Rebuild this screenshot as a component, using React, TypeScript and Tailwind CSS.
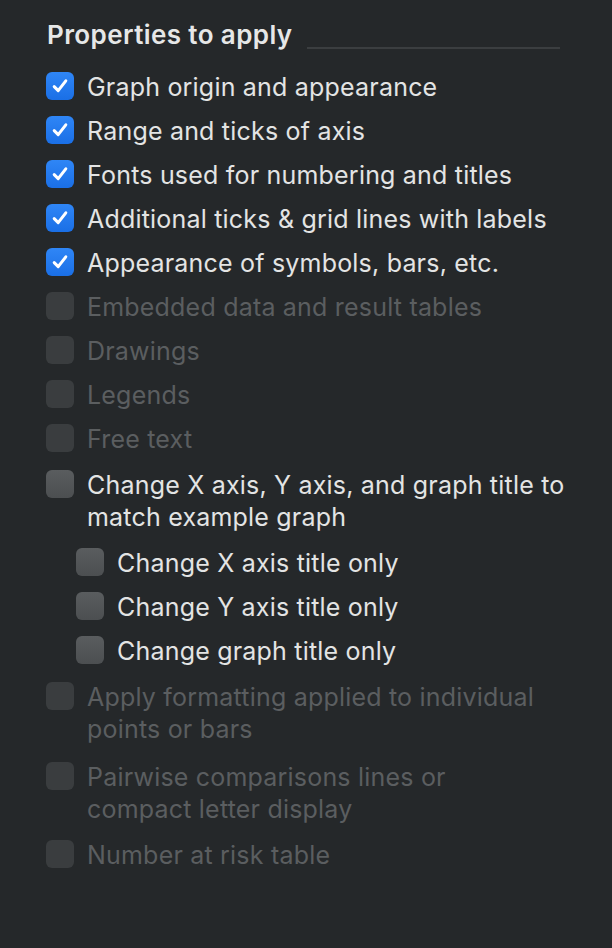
import React from "react";

type Item = {
  label: string[];
  checked?: boolean;
  disabled?: boolean;
  indent?: boolean;
};

const items: Item[] = [
  { label: ["Graph origin and appearance"], checked: true },
  { label: ["Range and ticks of axis"], checked: true },
  { label: ["Fonts used for numbering and titles"], checked: true },
  { label: ["Additional ticks & grid lines with labels"], checked: true },
  { label: ["Appearance of symbols, bars, etc."], checked: true },
  { label: ["Embedded data and result tables"], disabled: true },
  { label: ["Drawings"], disabled: true },
  { label: ["Legends"], disabled: true },
  { label: ["Free text"], disabled: true },
  { label: ["Change X axis, Y axis, and graph title to", "match example graph"] },
  { label: ["Change X axis title only"], indent: true },
  { label: ["Change Y axis title only"], indent: true },
  { label: ["Change graph title only"], indent: true },
  { label: ["Apply formatting applied to individual", "points or bars"], disabled: true },
  { label: ["Pairwise comparisons lines or", "compact letter display"], disabled: true },
  { label: ["Number at risk table"], disabled: true },
];

function Box({ checked, disabled }: { checked?: boolean; disabled?: boolean }) {
  if (checked) {
    return (
      <div className="w-[28px] h-[28px] shrink-0 rounded-[6px] bg-gradient-to-b from-[#2f86f6] to-[#1a6fe6] flex items-center justify-center">
        <svg width="20" height="20" viewBox="0 0 20 20" fill="none">
          <path d="M4.2 10.6 L8.2 14.6 L15.8 4.8" stroke="white" strokeWidth="3" strokeLinecap="round" strokeLinejoin="round" />
        </svg>
      </div>
    );
  }
  if (disabled) {
    return <div className="w-[28px] h-[28px] shrink-0 rounded-[6px] bg-[#3a3d3f]" />;
  }
  return <div className="w-[28px] h-[28px] shrink-0 rounded-[6px] bg-gradient-to-b from-[#5a5d5f] to-[#4c4f51]" />;
}

export default function App() {
  return (
    <div
      className="w-[612px] h-[948px] bg-[#25282a] pl-[46px] pr-[52px] pt-[19px]"
      style={{ fontFamily: "Inter, 'Noto Sans', sans-serif" }}
    >
      <div className="flex items-center h-[32px] mb-[13px]">
        <div className="text-[26px] leading-[32px] font-semibold tracking-[0.4px] text-[#e6e7e7] pl-[1px]">Properties to apply</div>
        <div className="flex-1 h-[2px] bg-[#3b3e40] ml-[14px] mt-[26px]" />
      </div>
      <div className="flex flex-col">
        {items.map((it, i) => {
          const multi = it.label.length > 1;
          return (
            <div
              key={i}
              className={`flex items-start gap-[13px] pt-[6px] pb-[5px] ${it.indent ? "pl-[30px]" : ""} ${multi ? "my-[2px]" : ""}`}
            >
              <div className="mt-[2px]">
                <Box checked={it.checked} disabled={it.disabled} />
              </div>
              <div
                className={`text-[25px] leading-[32px] tracking-[0.2px] pt-[1px] ${it.disabled ? "text-[#5b5e60]" : "text-[#e3e4e4]"}`}
              >
                {it.label.map((l, j) => (
                  <div key={j} className="whitespace-nowrap h-[32px]">{l}</div>
                ))}
              </div>
            </div>
          );
        })}
      </div>
    </div>
  );
}
